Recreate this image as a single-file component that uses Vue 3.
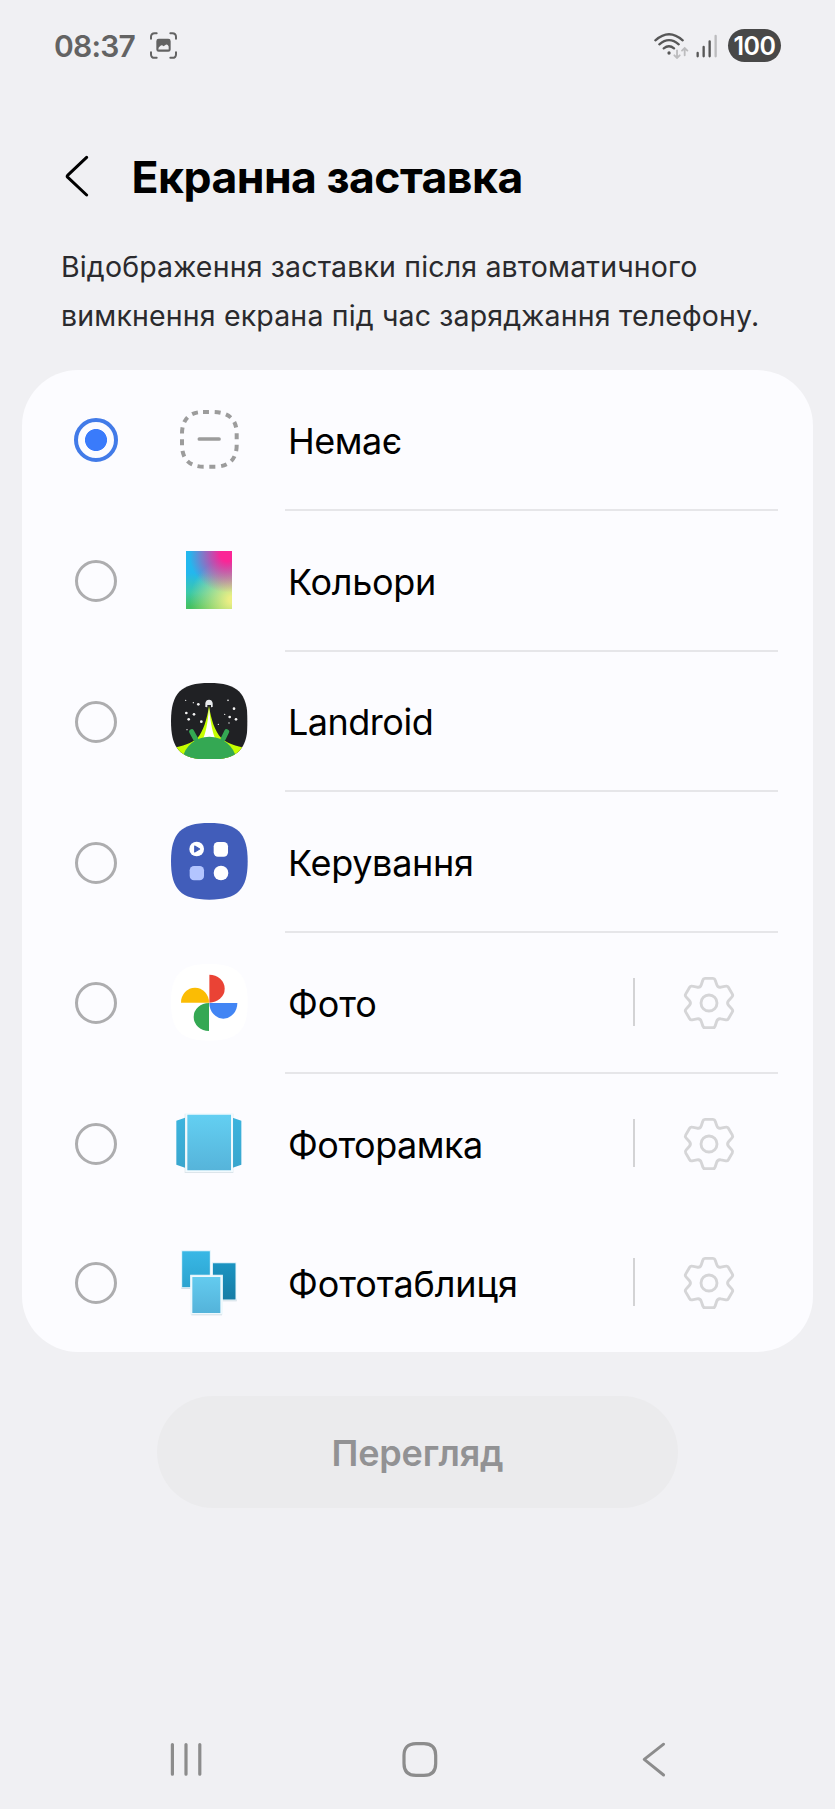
<script setup>
import { ref } from 'vue'

const selected = ref('none')

const items = [
  { id: 'none', label: 'Немає' },
  { id: 'colors', label: 'Кольори' },
  { id: 'landroid', label: 'Landroid' },
  { id: 'controls', label: 'Керування' },
  { id: 'photos', label: 'Фото', settings: true },
  { id: 'frame', label: 'Фоторамка', settings: true, plain: true },
  { id: 'table', label: 'Фототаблиця', settings: true, plain: true }
]

const stars = [
  [44, 52, 2], [67, 59, 2], [82, 64, 4], [46, 90, 4], [69, 94, 4], [53, 109, 4], [91, 116, 4], [48, 140, 2],
  [171, 52, 2.5], [189, 77, 4], [161, 94, 2], [176, 102, 4], [195, 109, 4], [142, 124, 2], [174, 120, 2]
]

// One tooth of the gear, repeated every 60 degrees
const tooth = [
  ['L', -18.5, -69], ['Q', -17, -74], ['', -12, -74], ['L', 12, -74], ['Q', 17, -74], ['', 18.5, -69],
  ['L', 23.2, -55], ['Q', 26.2, -45.4], ['', 36, -47.5]
]
const gear = Array.from({ length: 6 }, (_, i) => {
  const a = (i * Math.PI) / 3
  return tooth
    .map(([c, x, y]) => `${c}${(x * Math.cos(a) - y * Math.sin(a)).toFixed(1)} ${(x * Math.sin(a) + y * Math.cos(a)).toFixed(1)}`)
    .join(' ')
}).join(' ').replace('L', 'M') + 'Z'

const squircle = 'M0 115C0 30 30 0 115 0S230 30 230 115 200 230 115 230 0 200 0 115Z'
</script>

<template>
  <div class="screen">
    <header class="status">
      <span class="time">08:37</span>
      <svg class="shot" viewBox="0 0 81 80" fill="none" stroke="#636363" stroke-width="6" stroke-linecap="round">
        <path d="M3 20V14Q3 3 14 3H20M61 3H67Q78 3 78 14V20M78 60V66Q78 77 67 77H61M20 77H14Q3 77 3 66V60" />
        <path fill="#636363" stroke="none" fill-rule="evenodd" d="M26 20H55Q62 20 62 27V52Q62 59 55 59H26Q19 59 19 52V27Q19 20 26 20ZM25 52H56V43Q52 33 45 39L41 42Q35 36 30 42Q25 45 25 52Z" />
      </svg>
      <svg class="signal" viewBox="712 94 194 82" fill="none" stroke="#575757" stroke-width="7" stroke-linecap="round">
        <path d="M716 119Q757 82 798 119M728 131Q757 106 786 131M741 143Q757 131 772 143" />
        <circle cx="757" cy="157" r="5" fill="#575757" stroke="none" />
        <g stroke="#bcbcbe" stroke-width="5.5">
          <path d="M781 149V171M773 164L781 172L789 164M804 164V143M796 150L804 142L812 150" />
        </g>
        <path d="M843 157V167M861 139V167M879 122V167" />
        <path stroke="#bcbcbe" d="M897 106V167" />
      </svg>
      <span class="battery">100</span>
    </header>

    <div class="heading">
      <svg class="back" viewBox="0 0 24 42" fill="none" stroke="#000" stroke-width="3" stroke-linecap="round" stroke-linejoin="round">
        <path d="M21.6 2.4L2.6 20.4Q1.8 21.3 2.6 22.2L21.6 40" />
      </svg>
      <h1>Екранна заставка</h1>
    </div>

    <p class="desc">Відображення заставки після автоматичного<br>вимкнення екрана під час заряджання телефону.</p>

    <ul class="card">
      <li v-for="item in items" :key="item.id" class="row" @click="selected = item.id">
        <span class="radio" :class="{ on: selected === item.id }"></span>

        <svg v-if="item.id === 'none'" class="icon" viewBox="513 154 230 230" fill="none" stroke="#9c9c9c">
          <path stroke-width="12" pathLength="320" stroke-dasharray="10.3 9.7" d="M609 187H636C690 187 710 212 710 252V286C710 328 688 351 644 351H612C568 351 546 328 546 286V252C546 212 566 187 609 187Z" />
          <path stroke-width="11" stroke-linecap="round" d="M598 268H657" />
        </svg>

        <span v-else-if="item.id === 'colors'" class="icon"><span class="swatch"></span></span>

        <svg v-else-if="item.id === 'landroid'" class="icon" viewBox="0 0 230 230">
          <clipPath id="tile"><path :d="squircle" /></clipPath>
          <g clip-path="url(#tile)">
            <rect width="230" height="230" fill="#202124" />
            <circle v-for="(s, i) in stars" :key="i" :cx="s[0]" :cy="s[1]" :r="s[2]" fill="#f4f4f4" />
            <path fill="#c6ff00" d="M114 68C108 110 96 145 80 164C62 182 36 188 0 196V230H230V196C192 188 168 182 150 164C132 145 120 110 114 68Z" />
            <path fill="#fff" d="M114 74C111 110 107 140 97 165H132C122 140 118 110 114 74Z" />
            <path fill="#34a853" d="M32 230C42 190 72 161 115 161S188 190 198 230Z" />
            <path stroke="#34a853" stroke-width="15" stroke-linecap="round" d="M62 146L74 168M167 146L156 168" />
            <path fill="#e8eaed" d="M103 72V60Q105 50 114 50T125 60V72L120 73V66H109V73Z" />
          </g>
        </svg>

        <svg v-else-if="item.id === 'controls'" class="icon" viewBox="0 0 230 230">
          <path :d="squircle" fill="#415dba" />
          <circle cx="77" cy="78" r="22" fill="#fff" />
          <path fill="#415dba" stroke="#415dba" stroke-width="3" stroke-linejoin="round" d="M71 69V87L86 78Z" />
          <rect x="128" y="57" width="43" height="44" rx="13" fill="#fff" />
          <rect x="56" y="129" width="43" height="43" rx="13" fill="#b3c5ff" />
          <circle cx="150" cy="150" r="22" fill="#fff" />
        </svg>

        <svg v-else-if="item.id === 'photos'" class="icon" viewBox="0 0 230 230">
          <path :d="squircle" fill="#fff" />
          <path fill="#ea4335" d="M115 32A46 42 0 0 1 115 116Z" />
          <path fill="#fbbc04" d="M30 116A42 45 0 0 1 114 116Z" />
          <path fill="#34a853" d="M114 117V201A46 42 0 0 1 114 117Z" />
          <path fill="#4285f4" d="M115 117H199A42 47 0 0 1 115 117Z" />
        </svg>

        <svg v-else-if="item.id === 'frame'" class="icon frame" viewBox="63 493 230 230">
          <defs>
            <linearGradient id="front" x2="0" y2="1"><stop stop-color="#63cff2" /><stop offset="1" stop-color="#56b4da" /></linearGradient>
            <linearGradient id="side" x2="0" y2="1"><stop stop-color="#3cb4de" /><stop offset="1" stop-color="#39a6ce" /></linearGradient>
          </defs>
          <path fill="url(#side)" d="M79 543L105 534V684L79 675ZM274 543L248 534V684L274 675Z" />
          <path fill="#7a9fb0" opacity=".25" d="M104 522H250V700H104Z" />
          <path fill="#f1fafe" d="M106 520H249V697H106Z" />
          <path fill="url(#front)" d="M112 525H243V692H112Z" />
        </svg>

        <svg v-else class="icon table" viewBox="63 75 230 230">
          <defs>
            <linearGradient id="t1" x2="0" y2="1"><stop stop-color="#39b8e6" /><stop offset="1" stop-color="#2ca3cf" /></linearGradient>
            <linearGradient id="t2" x2="0" y2="1"><stop stop-color="#1b94c2" /><stop offset="1" stop-color="#187ca5" /></linearGradient>
            <linearGradient id="t3" x2="0" y2="1"><stop stop-color="#63cbef" /><stop offset="1" stop-color="#54b3da" /></linearGradient>
          </defs>
          <g stroke="#eef8fd" stroke-width="3">
            <path fill="#9ab3bf" fill-opacity=".5" stroke="none" d="M186 236H260V244H186ZM94 202H124V207H94ZM124 280H216V286H124Z" />
            <path fill="url(#t2)" d="M187 128H258V240H187Z" />
            <path fill="url(#t1)" d="M95 92H181V203H95Z" />
            <path fill="#eef8fd" d="M122 166H217V282H122Z" />
            <path fill="url(#t3)" stroke="none" d="M127 171H211V279H127Z" />
          </g>
        </svg>

        <div class="body" :class="{ plain: item.plain }">
          <span class="label" :class="`label-${item.id}`">{{ item.label }}</span>
          <span v-if="item.settings" class="settings">
            <svg class="gear" viewBox="-81 -81 162 162" fill="none" stroke="#d5d5d7" stroke-width="8.6" stroke-linejoin="round">
              <path :d="gear" />
              <circle r="24" />
            </svg>
          </span>
        </div>
      </li>
    </ul>

    <button class="preview" disabled>Перегляд</button>

    <nav class="nav">
      <svg viewBox="0 0 36 44" fill="none" stroke="#8c8c8c" stroke-width="3.2" stroke-linecap="round">
        <path d="M4.4 5.6V35.2M18 5.6V35.2M31.8 5.6V35.2" />
      </svg>
      <svg viewBox="0 0 36 44" fill="none" stroke="#8c8c8c" stroke-width="3.2">
        <path d="M14 4.6H22C30 4.6 33.7 8.8 33.7 16.5V24.5C33.7 32.2 30 36.4 22 36.4H14C6 36.4 2 32.2 2 24.5V16.5C2 8.8 6 4.6 14 4.6Z" />
      </svg>
      <svg viewBox="0 0 36 44" fill="none" stroke="#8c8c8c" stroke-width="2.9" stroke-linecap="round" stroke-linejoin="round">
        <path d="M27.6 5.2L8.2 20.4L27.6 36" />
      </svg>
    </nav>
  </div>
</template>

<style>
body {
  background: #f0f0f3;
}
</style>

<style scoped>
.screen {
  box-sizing: border-box;
  width: 835px;
  height: 1809px;
  display: flex;
  flex-direction: column;
  overflow: hidden;
  background: #f0f0f3;
  color: #000;
  font-family: Inter, "Noto Sans", sans-serif;
}
.status {
  display: flex;
  align-items: center;
  height: 33px;
  margin-top: 29px;
  padding: 0 54px;
}
.time {
  width: 96px;
  color: #636363;
  font-size: 30px;
  font-weight: 600;
  line-height: 34px;
  letter-spacing: -0.8px;
}
.shot {
  width: 27px;
  height: 27px;
}
.signal {
  width: 64.7px;
  height: 27.3px;
  margin-left: auto;
}
.battery {
  width: 53px;
  height: 33px;
  margin-left: 9px;
  border-radius: 17px;
  background: #484848;
  color: #fff;
  font-size: 25px;
  font-weight: 600;
  line-height: 34px;
  letter-spacing: -0.5px;
  text-align: center;
}
.heading {
  display: flex;
  align-items: center;
  height: 60px;
  margin-top: 84px;
  padding-left: 65px;
}
.back {
  width: 24px;
  height: 42px;
}
h1 {
  margin: 2px 0 0 42.5px;
  font-size: 44.5px;
  font-weight: 700;
  line-height: 56px;
  letter-spacing: -0.52px;
  white-space: nowrap;
}
.desc {
  height: 98px;
  margin: 36px 0 0 61px;
  color: #2a2a2d;
  font-size: 28.5px;
  line-height: 49px;
  letter-spacing: 0.16px;
  white-space: nowrap;
}
.card {
  height: 982px;
  margin: 30px 22px 0;
  padding: 0;
  border-radius: 56px;
  background: #fcfcff;
  list-style: none;
  flex-shrink: 0;
}
.row {
  display: flex;
  align-items: center;
  height: 140.75px;
  padding-left: 52px;
}
.row:last-child {
  height: 137.5px;
}
.radio {
  box-sizing: border-box;
  width: 42px;
  height: 42px;
  margin: 0 54px 0 1px;
  border: 3px solid #adadaf;
  border-radius: 50%;
}
.radio.on {
  width: 44px;
  height: 44px;
  margin: 0 53px 0 0;
  border: 4px solid #427be8;
  background: radial-gradient(circle, #3a7bfb 10.6px, transparent 11.4px);
}
.icon {
  display: flex;
  align-items: center;
  justify-content: center;
  width: 76.7px;
  height: 76.7px;
  margin-bottom: 2px;
}
.icon.frame {
  margin-bottom: 4px;
}
.icon.table {
  margin-bottom: 0;
}
.swatch {
  width: 46px;
  height: 58px;
  background:
    radial-gradient(circle 38px at 90% 6%, #fb2596 18%, rgba(251, 37, 150, 0)),
    radial-gradient(circle 42px at 100% 84%, #ebee84 8%, rgba(235, 238, 132, 0)),
    linear-gradient(180deg, #23b7ee 38%, #3cc9a8 72%, #44c163 96%);
}
.body {
  box-sizing: border-box;
  display: flex;
  align-items: center;
  width: 493.5px;
  height: 100%;
  margin-left: 37.3px;
  border-bottom: 2px solid #e6e6e9;
}
.body.plain {
  border-bottom-color: transparent;
}
.label {
  padding: 3px 0 0 3px;
  font-size: 36px;
  line-height: 44px;
  letter-spacing: -0.3px;
  white-space: nowrap;
}
.label-none,
.label-frame {
  letter-spacing: -0.5px;
}
.label-landroid {
  letter-spacing: -0.5px;
}
.label-photos,
.label-table {
  letter-spacing: -0.1px;
}
.settings {
  display: flex;
  align-items: center;
  height: 48px;
  margin-left: auto;
  padding: 1px 42.5px 0 47px;
  border-left: 2px solid #d3d3d5;
  box-sizing: border-box;
}
.gear {
  width: 54px;
  height: 54px;
}
.preview {
  width: 521px;
  height: 112px;
  margin: 44px 0 0 157px;
  padding: 1px 0 0;
  border: 0;
  border-radius: 56px;
  background: #ebebed;
  color: #929294;
  font-family: inherit;
  font-size: 36px;
  font-weight: 600;
  letter-spacing: -0.2px;
  flex-shrink: 0;
}
.nav {
  display: flex;
  justify-content: space-between;
  margin: 231px 163px 0 168px;
}
.nav svg {
  width: 36px;
  height: 44px;
}
</style>
